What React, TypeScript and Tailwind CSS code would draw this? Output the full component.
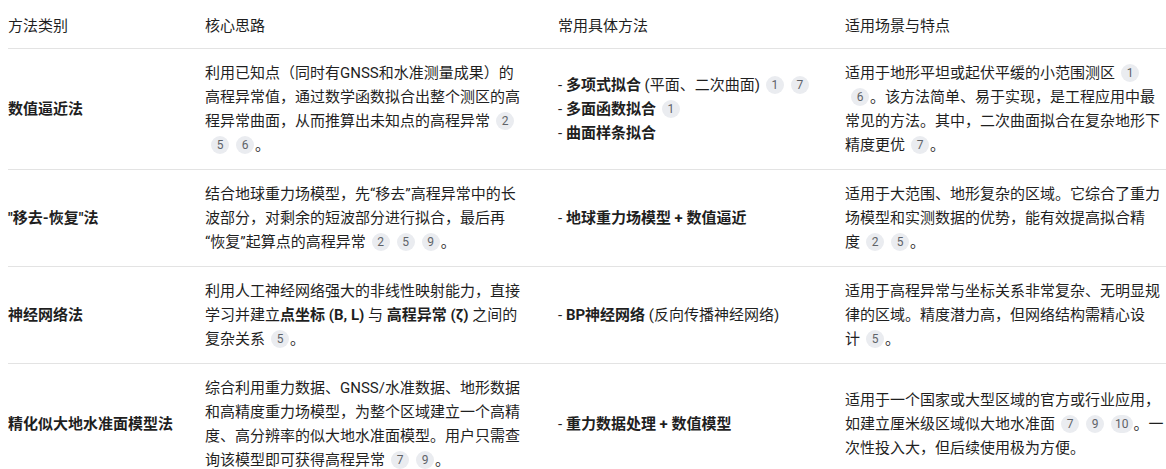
import React from 'react';

type Row = {
  name: React.ReactNode;
  idea: React.ReactNode;
  methods: React.ReactNode;
  scene: React.ReactNode;
};

function Ref({ n }: { n: number }) {
  return (
    <span className="inline-flex items-center justify-center h-[18px] min-w-[18px] px-[4px] ml-[6px] mr-px rounded-full bg-[#eaecf0] text-[#5f6368] text-[12px] leading-none align-middle relative -top-px">
      {n}
    </span>
  );
}

// the last character stays on the same line as the first citation
function Cite({ ch, refs }: { ch: string; refs: number[] }) {
  return (
    <>
      <span className="whitespace-nowrap">
        {ch}
        <Ref n={refs[0]} />
      </span>
      {refs.slice(1).map((n) => (
        <Ref key={n} n={n} />
      ))}
    </>
  );
}

const rows: Row[] = [
  {
    name: '数值逼近法',
    idea: (
      <>
        利用已知点（同时有GNSS和水准测量成果）的高程异常值，通过数学函数拟合出整个测区的高程异常曲面，从而推算出未知点的高程异
        <Cite ch="常" refs={[2, 5, 6]} />。
      </>
    ),
    methods: (
      <>
        - <b className="font-bold">多项式拟合</b> (平面、二次曲面
        <Cite ch=")" refs={[1, 7]} />
        <br />- <b className="font-bold">多面函数拟</b>
        <span className="whitespace-nowrap">
          <b className="font-bold">合</b>
          <Ref n={1} />
        </span>
        <br />- <b className="font-bold">曲面样条拟合</b>
      </>
    ),
    scene: (
      <>
        适用于地形平坦或起伏平缓的小范围测
        <Cite ch="区" refs={[1, 6]} />。该方法简单、易于实现，是工程应用中最常见的方法。其中，二次曲面拟合在复杂地形下精度更
        <Cite ch="优" refs={[7]} />。
      </>
    ),
  },
  {
    name: '"移去-恢复"法',
    idea: (
      <>
        结合地球重力场模型，先“移去”高程异常中的长波部分，对剩余的短波部分进行拟合，最后再
        <wbr />
        “恢复”起算点的高程异
        <Cite ch="常" refs={[2, 5, 9]} />。
      </>
    ),
    methods: (
      <>
        - <b className="font-bold">地球重力场模型 + 数值逼近</b>
      </>
    ),
    scene: (
      <>
        适用于大范围、地形复杂的区域。它综合了重力场模型和实测数据的优势，能有效提高拟合精
        <Cite ch="度" refs={[2, 5]} />。
      </>
    ),
  },
  {
    name: '神经网络法',
    idea: (
      <>
        利用人工神经网络强大的非线性映射能力，直接学习并建立<b className="font-bold">点坐标 (B, L)</b> 与{' '}
        <b className="font-bold">高程异常 (ζ)</b> 之间的复杂关
        <Cite ch="系" refs={[5]} />。
      </>
    ),
    methods: (
      <>
        - <b className="font-bold">BP神经网络</b> (反向传播神经网络)
      </>
    ),
    scene: (
      <>
        适用于高程异常与坐标关系非常复杂、无明显规律的区域。精度潜力高，但网络结构需精心设
        <Cite ch="计" refs={[5]} />。
      </>
    ),
  },
  {
    name: '精化似大地水准面模型法',
    idea: (
      <>
        综合利用重力数据、GNSS/水准数据、地形数据和高精度重力场模型，为整个区域建立一个高精度、高分辨率的似大地水准面模型。用户只需查询该模型即可获得高程异
        <Cite ch="常" refs={[7, 9]} />。
      </>
    ),
    methods: (
      <>
        - <b className="font-bold">重力数据处理 + 数值模型</b>
      </>
    ),
    scene: (
      <>
        适用于一个国家或大型区域的官方或行业应用，如建立厘米级区域似大地水准
        <Cite ch="面" refs={[7, 9, 10]} />。一次性投入大，但后续使用极为方便。
      </>
    ),
  },
];

export default function App() {
  return (
    <div
      className="w-full overflow-hidden bg-white pl-2 text-[15px] leading-6 text-[#1f1f1f]"
      style={{ fontFamily: 'Roboto, "Noto Sans CJK SC", sans-serif' }}
    >
      <table className="table-fixed border-collapse w-[1158px]">
        <colgroup>
          <col className="w-[185px]" />
          <col className="w-[353px]" />
          <col className="w-[287px]" />
          <col className="w-[333px]" />
        </colgroup>
        <thead>
          <tr className="border-b border-[#e3e3e3] text-left">
            <th className="font-normal pl-0 pr-3 pt-[14px] pb-[10px]">方法类别</th>
            <th className="font-normal pl-3 pr-6 pt-[14px] pb-[10px]">核心思路</th>
            <th className="font-normal pl-3 pr-3 pt-[14px] pb-[10px]">常用具体方法</th>
            <th className="font-normal pl-3 pr-[2px] pt-[14px] pb-[10px]">适用场景与特点</th>
          </tr>
        </thead>
        <tbody>
          {rows.map((r, i) => (
            <tr key={i} className="border-b border-[#e3e3e3] align-middle">
              <td className="pl-0 pr-3 py-3 font-bold">{r.name}</td>
              <td className="pl-3 pr-6 py-3">{r.idea}</td>
              <td className="pl-3 pr-3 py-3">{r.methods}</td>
              <td className="pl-3 pr-[2px] py-3">{r.scene}</td>
            </tr>
          ))}
        </tbody>
      </table>
    </div>
  );
}
